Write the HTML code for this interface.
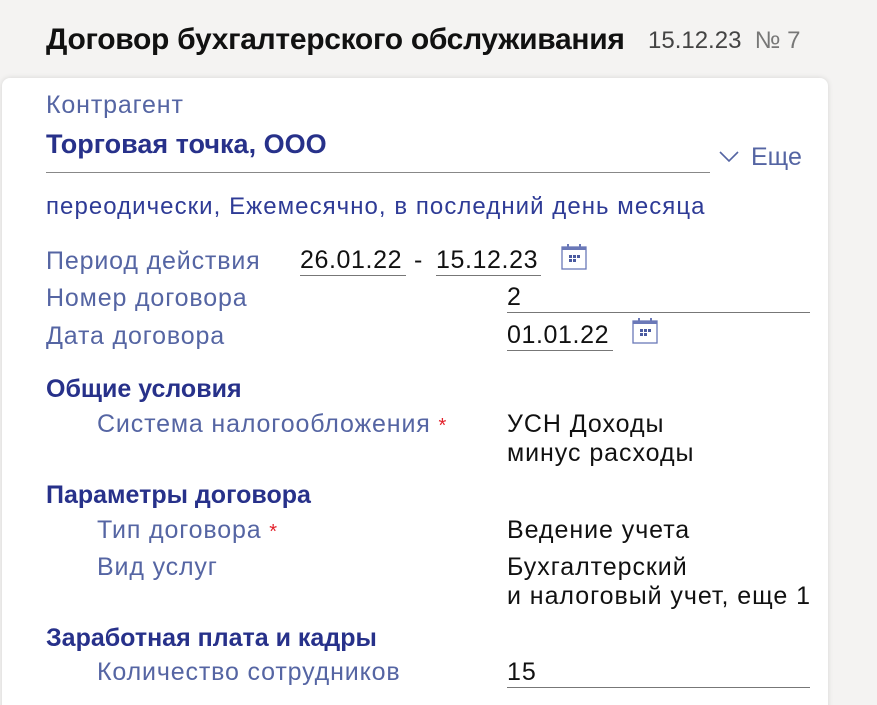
<!DOCTYPE html>
<html><head><meta charset="utf-8"><style>
html,body{margin:0;width:877px;height:705px;overflow:hidden}
body{background:#f4f3f2;font-family:"Liberation Sans",sans-serif;position:relative}
.a{position:absolute;white-space:nowrap;line-height:1}
.card{position:absolute;left:2px;top:78px;width:826px;height:640px;background:#fff;border-radius:8px;box-shadow:0 0 6px rgba(0,0,0,.12)}
.lbl{color:#5565a3;font-size:25px;letter-spacing:0.85px}
.val{color:#111;font-size:25px;letter-spacing:0.95px}
.hdr{color:#27318a;font-size:25px;font-weight:bold}
.ul{position:absolute;height:1px;background:#777}
.star{color:#e3212b;font-size:20px}
</style></head><body>
<div class="a" style="left:46px;top:25px;font-size:30px;font-weight:bold;color:#111;letter-spacing:-0.3px">Договор бухгалтерского обслуживания</div>
<div class="a" style="left:648px;top:29px;font-size:24px;color:#444">15.12.23&nbsp; <span style="color:#777">№ 7</span></div>
<div class="card"></div>
<div class="a lbl" style="left:46px;top:93px">Контрагент</div>
<div class="a" style="left:46px;top:131px;font-size:27px;font-weight:bold;color:#27318a">Торговая точка, ООО</div>
<div class="ul" style="left:46px;top:172px;width:664px;background:#888"></div>
<svg class="a" style="left:718px;top:150px" width="22" height="14"><path d="M2 2 L11 11 L20 2" fill="none" stroke="#5565a3" stroke-width="1.6"/></svg>
<div class="a lbl" style="left:751px;top:145px;letter-spacing:0">Еще</div>
<div class="a" style="left:46px;top:195px;font-size:24px;letter-spacing:1.05px;color:#2e3b96">переодически, Ежемесячно, в последний день месяца</div>
<div class="a lbl" style="left:46px;top:249px">Период действия</div>
<div class="a val" style="left:300px;top:248px;letter-spacing:0.6px">26.01.22</div>
<div class="ul" style="left:300px;top:275px;width:106px"></div>
<div class="a val" style="left:414px;top:248px">-</div>
<div class="a val" style="left:436px;top:248px;letter-spacing:0.6px">15.12.23</div>
<div class="ul" style="left:436px;top:275px;width:105px"></div>
<svg class="a" style="left:561px;top:243px" width="26" height="28"><rect x="1" y="4" width="24" height="22" fill="none" stroke="#6a78b8" stroke-width="1.3"/><rect x="1" y="4" width="24" height="3" fill="#6a78b8"/><rect x="6" y="1" width="2" height="5" fill="#6a78b8"/><rect x="18" y="1" width="2" height="5" fill="#6a78b8"/><g fill="#4a5aa0"><rect x="8" y="12" width="3" height="3"/><rect x="12" y="12" width="3" height="3"/><rect x="16" y="12" width="3" height="3"/><rect x="8" y="16" width="3" height="3"/><rect x="12" y="16" width="3" height="3"/></g></svg>
<div class="a lbl" style="left:46px;top:286px">Номер договора</div>
<div class="a val" style="left:507px;top:285px">2</div>
<div class="ul" style="left:507px;top:312px;width:303px"></div>
<div class="a lbl" style="left:46px;top:324px">Дата договора</div>
<div class="a val" style="left:507px;top:323px;letter-spacing:0.6px">01.01.22</div>
<div class="ul" style="left:507px;top:350px;width:106px"></div>
<svg class="a" style="left:632px;top:317px" width="26" height="28"><rect x="1" y="4" width="24" height="22" fill="none" stroke="#6a78b8" stroke-width="1.3"/><rect x="1" y="4" width="24" height="3" fill="#6a78b8"/><rect x="6" y="1" width="2" height="5" fill="#6a78b8"/><rect x="18" y="1" width="2" height="5" fill="#6a78b8"/><g fill="#4a5aa0"><rect x="8" y="12" width="3" height="3"/><rect x="12" y="12" width="3" height="3"/><rect x="16" y="12" width="3" height="3"/><rect x="8" y="16" width="3" height="3"/><rect x="12" y="16" width="3" height="3"/></g></svg>
<div class="a hdr" style="left:46px;top:377px">Общие условия</div>
<div class="a lbl" style="left:97px;top:412px">Система налогообложения <span class="star">*</span></div>
<div class="a val" style="left:507px;top:412px">УСН Доходы</div>
<div class="a val" style="left:507px;top:441px">минус расходы</div>
<div class="a hdr" style="left:46px;top:483px">Параметры договора</div>
<div class="a lbl" style="left:97px;top:518px">Тип договора <span class="star">*</span></div>
<div class="a val" style="left:507px;top:518px">Ведение учета</div>
<div class="a lbl" style="left:97px;top:555px">Вид услуг</div>
<div class="a val" style="left:507px;top:555px">Бухгалтерский</div>
<div class="a val" style="left:507px;top:584px">и налоговый учет, еще 1</div>
<div class="a hdr" style="left:46px;top:626px">Заработная плата и кадры</div>
<div class="a lbl" style="left:97px;top:660px">Количество сотрудников</div>
<div class="a val" style="left:507px;top:660px">15</div>
<div class="ul" style="left:507px;top:687px;width:303px"></div>
</body></html>
